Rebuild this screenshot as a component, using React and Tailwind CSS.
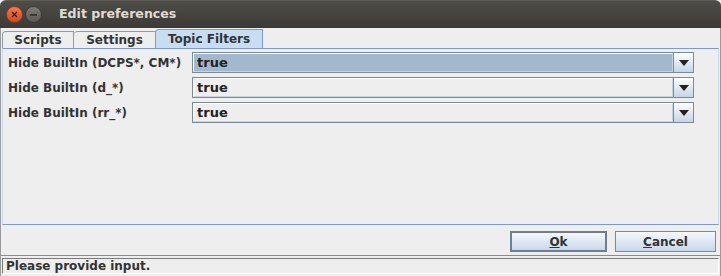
import React from "react";

function Arrow() {
  return (
    <svg width="10" height="6" viewBox="0 0 10 6">
      <path d="M0 0 H10 L5 6 Z" fill="#222" />
    </svg>
  );
}

function Combo({ selected }) {
  return (
    <div className="flex h-[21px] w-[502px] border border-[#7a8a99]">
      <div
        className={
          "flex-1 flex items-center pl-[3px] border border-t-white border-l-white border-b-[#c6d4e2] border-r-[#c6d4e2] " +
          (selected ? "bg-[#a3b8cc] border-[#a3b8cc]" : "bg-[#eeeeee]")
        }
      >
        <span className="text-[13px] font-bold text-[#222] leading-none">true</span>
      </div>
      <div className="w-[20px] flex items-center justify-center border-l border-[#7a8a99] bg-gradient-to-b from-[#ffffff] to-[#c5d5e6]">
        <Arrow />
      </div>
    </div>
  );
}

function Row({ label, selected }) {
  return (
    <div className="flex items-center h-[21px]">
      <div className="w-[184px] text-[12px] font-bold text-[#333] leading-none">{label}</div>
      <Combo selected={selected} />
    </div>
  );
}

export default function App() {
  return (
    <div
      className="w-[721px] h-[276px] flex flex-col bg-[#eeeeee] overflow-hidden"
      style={{ fontFamily: '"DejaVu Sans", sans-serif' }}
    >
      {/* Title bar */}
      <div className="h-[28px] shrink-0 rounded-t-[6px] bg-gradient-to-b from-[#4e4d48] to-[#3b3a36] border-t border-[#5c5b56] flex items-center pl-[5px]">
        <div className="w-[17px] h-[17px] rounded-full bg-gradient-to-b from-[#f07a4f] to-[#d9461c] border border-[#8a3a1e] flex items-center justify-center ml-[1px]">
          <svg width="7" height="7" viewBox="0 0 7 7">
            <path d="M1 1 L6 6 M6 1 L1 6" stroke="#3a1a0e" strokeWidth="1.4" />
          </svg>
        </div>
        <div className="w-[17px] h-[17px] rounded-full bg-gradient-to-b from-[#7d7c77] to-[#5a5954] border border-[#3a3935] flex items-center justify-center ml-[2px]">
          <div className="w-[7px] h-[2px] bg-[#3a3935]" />
        </div>
        <div className="ml-[17px] text-[12.6px] font-bold text-[#dfdbd2] leading-none">Edit preferences</div>
      </div>

      {/* Body */}
      <div className="flex-1 flex flex-col border-l border-r border-[#9a9a9a]">
        {/* Tabs */}
        <div className="h-[20px] flex items-end pl-[1px] shrink-0">
          <div className="h-[17px] w-[72px] border border-b-0 border-[#8e9aa9] rounded-tl-[4px] bg-[#eeeeee] flex items-center justify-center text-[12px] font-bold text-[#333] leading-none">
            Scripts
          </div>
          <div className="h-[17px] w-[82px] border border-l-0 border-b-0 border-[#8e9aa9] rounded-tl-[4px] bg-[#eeeeee] flex items-center justify-center text-[12px] font-bold text-[#333] leading-none">
            Settings
          </div>
          <div className="-ml-[1px] h-[19px] w-[108px] border border-b-0 border-[#7b9bd0] rounded-tl-[4px] bg-[#c8ddf2] flex items-center justify-center text-[12px] font-bold text-[#333] leading-none">
            Topic Filters
          </div>
        </div>

        {/* Panel */}
        <div className="h-[177px] mx-[1px] border border-t-[#7b9bd0] border-l-[#c8ddf2] border-r-[#c8ddf2] border-b-[#7b9bd0] flex flex-col gap-[4px] pt-[3px] pl-[5px]">
          <Row label="Hide BuiltIn (DCPS*, CM*)" selected />
          <Row label="Hide BuiltIn (d_*)" />
          <Row label="Hide BuiltIn (rr_*)" />
        </div>

        {/* Buttons */}
        <div className="h-[30px] flex items-center justify-end gap-[8px] pr-[4px] pt-[3px] shrink-0">
          <button className="w-[97px] h-[21px] border-2 border-[#6f7e8e] bg-gradient-to-b from-[#f5f8fb] to-[#c8d8ea] text-[12px] font-bold text-[#333] leading-none">
            <span className="underline">O</span>k
          </button>
          <button className="w-[101px] h-[21px] border border-[#7a8a99] bg-gradient-to-b from-[#f5f8fb] to-[#c8d8ea] text-[12px] font-bold text-[#333] leading-none">
            <span className="underline">C</span>ancel
          </button>
        </div>

        {/* Status */}
        <div className="flex-1 border-t border-[#8c8c8c] pt-[2px] pb-[2px] px-[1px] flex">
          <div className="flex-1 border border-t-[#7a7a7a] border-l-[#7a7a7a] border-b-white border-r-white flex items-center pl-[3px] text-[12px] font-bold text-[#333] leading-none">
            Please provide input.
          </div>
        </div>
      </div>
    </div>
  );
}
